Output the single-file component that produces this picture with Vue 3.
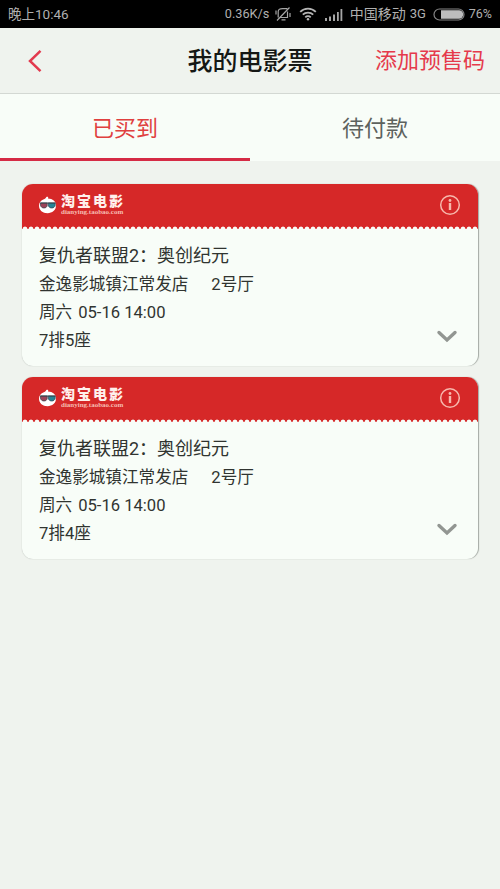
<script setup>
const tickets = [
  { title: '复仇者联盟2：奥创纪元', cinema: '金逸影城镇江常发店', hall: '2号厅', day: '周六', time: '05-16 14:00', seat: '7排5座' },
  { title: '复仇者联盟2：奥创纪元', cinema: '金逸影城镇江常发店', hall: '2号厅', day: '周六', time: '05-16 14:00', seat: '7排4座' },
]
</script>

<template>
  <div class="screen">
    <div class="status">
      <span class="clock">晚上10:46</span>
      <span class="speed">0.36K/s</span>
      <svg class="mute" width="18" height="16" viewBox="0 0 18 16" fill="none" stroke="#a5a5a5" stroke-width="1.2">
        <path d="M4.200 11.500V5.500C4.200 3.500 6 2.600 8.500 2.600h4.800M13.500 5.500v6H6.500M7.500 13.800h4M15.500 1.500 3 14.500M2 4.500v4M16 7v4" />
      </svg>
      <svg class="wifi" width="18" height="14" viewBox="0 0 18 14" fill="none" stroke="#b5b5b5" stroke-width="1.8">
        <path d="M1.200 4.800a11 11 0 0 1 15.600 0M3.800 7.700a7.400 7.400 0 0 1 10.400 0M6.300 10.300a3.800 3.800 0 0 1 5.400 0" />
        <circle cx="9" cy="12.300" r="1.200" fill="#b5b5b5" stroke="none" />
      </svg>
      <svg class="signal" width="18" height="13" viewBox="0 0 18 13" fill="#a5a5a5">
        <path d="M0 10h2v3H0zM4 8.500h2V13H4zM8 6.500h2V13H8zM12 4h1.800v9H12zM15.500 1h1.800v12h-1.800z" />
      </svg>
      <span class="carrier">中国移动</span>
      <span class="net">3G</span>
      <svg class="battery" width="32" height="13" viewBox="0 0 32 13">
        <rect x="1" y="1" width="30" height="11" rx="5.500" fill="none" stroke="#858585" stroke-width="1.200" />
        <path d="M8 2.300h18a4.200 4.200 0 0 1 0 8.400H8Z" fill="#bdbdbd" />
      </svg>
      <span class="percent">76%</span>
    </div>

    <header class="header">
      <svg class="back" width="14" height="24" viewBox="0 0 14 24" fill="none" stroke="#e23a4e" stroke-width="2.500">
        <path d="M12.500 1.800 2 12l10.500 10.200" />
      </svg>
      <h1>我的电影票</h1>
      <span class="add">添加预售码</span>
    </header>

    <nav class="tabs">
      <span class="tab active">已买到</span>
      <span class="tab">待付款</span>
    </nav>

    <main class="list">
      <article v-for="t in tickets" :key="t.seat" class="ticket">
        <div class="band">
          <svg class="mascot" width="19" height="18" viewBox="0 0 19 18">
            <path d="M8.200 1.200c1.200-.8 2.600-.1 1.800 1.300 4.600 0 8 2.900 8 7.100 0 4.600-3.700 7.600-8.500 7.600S1 14.200 1 9.700c0-2.800 1.600-5 4.300-6.200C7.300 2.900 7.500 2.100 8.200 1.200Z" fill="#fff" />
            <path d="M2.500 7h6.700v2.200c0 3.700-6.200 3.800-6.700 0Z" fill="#9c4358" stroke="#37424c" stroke-width=".7" />
            <path d="M10.300 7h6.900v2.200c-.4 3.800-6.600 3.700-6.900 0Z" fill="#268395" stroke="#37424c" stroke-width=".7" />
            <path d="M2.200 7h15.200" stroke="#37424c" stroke-width="1" />
          </svg>
          <div class="brand">
            <span class="name">淘宝电影</span>
            <span class="domain">dianying.taobao.com</span>
          </div>
          <svg class="info" width="22" height="22" viewBox="0 0 22 22" fill="none" stroke="#f7b8ac">
            <circle cx="11" cy="11" r="9.300" stroke-width="1.500" />
            <path d="M11 9v7" stroke-width="2.400" />
            <circle cx="11" cy="6.500" r="1.400" fill="#f7b8ac" stroke="none" />
          </svg>
        </div>
        <div class="perforation"></div>
        <div class="body">
          <div class="title">{{ t.title }}</div>
          <div class="line"><span>{{ t.cinema }}</span><span class="hall">{{ t.hall }}</span></div>
          <div class="line"><span>{{ t.day }}</span><span class="time">{{ t.time }}</span></div>
          <div class="line">{{ t.seat }}</div>
          <svg class="chevron" width="22" height="14" viewBox="0 0 22 14" fill="none" stroke="#929692" stroke-width="3.400" stroke-linecap="round">
            <path d="M3 2.500 11 10 19 2.500" />
          </svg>
        </div>
      </article>
    </main>
  </div>
</template>

<style>
body {
  background: #eff3ee;
}
</style>

<style scoped>
.screen {
  width: 500px;
  height: 889px;
  overflow: hidden;
  background: #eff3ee;
  font-family: Roboto, "Noto Sans CJK SC", sans-serif;
  color: #303430;
}
.status {
  display: flex;
  align-items: center;
  box-sizing: border-box;
  height: 28px;
  padding: 0 8px;
  background: #000;
  color: #b0b0b0;
  font-size: 13px;
  line-height: 28px;
  white-space: nowrap;
}
.status svg {
  flex: none;
}
.clock {
  width: 217px;
  font-size: 13.5px;
}
.speed {
  width: 49px;
  font-size: 12.7px;
}
.wifi {
  margin-left: 7px;
}
.signal {
  margin-left: 8px;
}
.carrier {
  width: 60px;
  margin-left: 7px;
  font-size: 14px;
}
.net {
  width: 23px;
}
.percent {
  margin-left: 4px;
  font-size: 12.5px;
}
.header {
  display: grid;
  grid-template-columns: 125px 250px 125px;
  align-items: center;
  box-sizing: border-box;
  height: 66px;
  border-bottom: 1px solid #d3d8d3;
}
.back {
  margin-left: 28px;
}
h1 {
  margin: 0;
  padding-top: 3px;
  font-size: 25px;
  font-weight: 500;
  line-height: 62px;
  text-align: center;
  color: #151815;
}
.add {
  font-size: 22px;
  line-height: 65px;
  color: #e53a4b;
}
.tabs {
  display: flex;
  height: 67px;
  background: #f8fdf8;
}
.tab {
  box-sizing: border-box;
  width: 250px;
  font-size: 22px;
  line-height: 70px;
  text-align: center;
  color: #5d625e;
}
.tab.active {
  border-bottom: 3px solid #d52b45;
  color: #e0403f;
}
.list {
  display: flex;
  flex-direction: column;
  gap: 11px;
  padding: 23px 22px;
}
.ticket {
  box-sizing: border-box;
  height: 182px;
  overflow: hidden;
  border-radius: 11px;
  background: #f8fdf8;
  box-shadow: 0.5px 0 1px #a3a9a3;
}
.band {
  display: flex;
  align-items: center;
  height: 42px;
  padding: 0 16px;
  background: #d62828;
}
.brand {
  display: flex;
  flex-direction: column;
  margin-left: 4px;
  color: #fff0ec;
}
.name {
  font-size: 14px;
  font-weight: 900;
  letter-spacing: 2px;
  line-height: 15px;
}
.domain {
  font-family: "Liberation Serif", serif;
  font-size: 7px;
  font-weight: 700;
  line-height: 7px;
  color: #f6bdb2;
}
.info {
  margin-left: auto;
  margin-right: 1px;
}
.perforation {
  height: 3px;
  background: radial-gradient(circle at 3px 3px, #f8fdf8 2px, #d62828 2.8px) 0 0 / 6px 3px repeat-x;
}
.body {
  position: relative;
  padding: 12px 17px 0;
}
.title {
  font-size: 18px;
  line-height: 30px;
}
.line {
  display: flex;
  height: 28.2px;
  font-size: 16.6px;
  line-height: 28.2px;
}
.hall {
  margin-left: 23px;
}
.time {
  margin-left: 6px;
}
.chevron {
  position: absolute;
  right: 20px;
  bottom: 12px;
}
</style>
